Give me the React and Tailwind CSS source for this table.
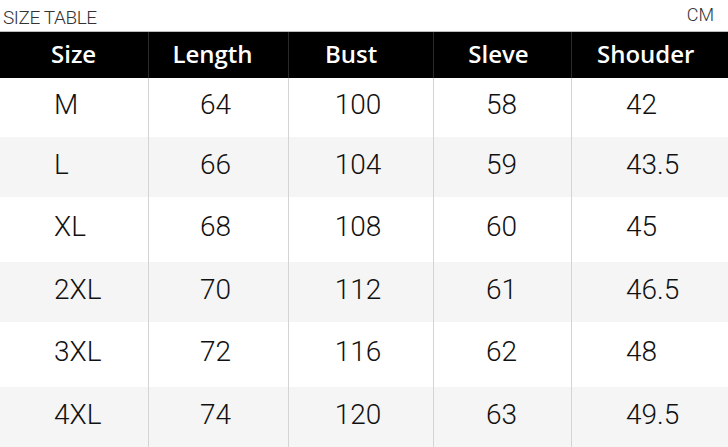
const rows = [
  { size: "M", length: "64", bust: "100", sleve: "58", shoulder: "42", h: "h-[59px]", bg: "bg-white" },
  { size: "L", length: "66", bust: "104", sleve: "59", shoulder: "43.5", h: "h-[60px]", bg: "bg-[#f5f5f5]" },
  { size: "XL", length: "68", bust: "108", sleve: "60", shoulder: "45", h: "h-[65px]", bg: "bg-white" },
  { size: "2XL", length: "70", bust: "112", sleve: "61", shoulder: "46.5", h: "h-[60px]", bg: "bg-[#f5f5f5]" },
  { size: "3XL", length: "72", bust: "116", sleve: "62", shoulder: "48", h: "h-[65px]", bg: "bg-white" },
  { size: "4XL", length: "74", bust: "120", sleve: "63", shoulder: "49.5", h: "h-[60px]", bg: "bg-[#f5f5f5]" },
];

const grid = "grid grid-cols-[148px_140px_145px_138px_157px]";

export default function App() {
  return (
    <div className="w-[728px] h-[447px] bg-white overflow-hidden font-['Roboto','Liberation_Sans',sans-serif]">
      {/* title line */}
      <div className="h-[31px] flex items-start justify-between px-[3px] pt-[8px] font-light text-[#333] leading-none">
        <span className="text-[19px] tracking-[-0.4px]">SIZE TABLE</span>
        <span className="text-[18px] pr-[11px] -mt-[2px]">CM</span>
      </div>
      <div className="h-px bg-[#bdbdbd]" />

      {/* header */}
      <div className={`${grid} h-[46px] bg-black text-white text-[24px] font-semibold font-['Open_Sans','Noto_Sans',sans-serif] items-center leading-none`}>
        <div className="pl-[51px] pb-[2px]">Size</div>
        <div className="text-center pr-[12px] pb-[2px] border-l border-[#2a2a2a] h-full flex items-center justify-center">Length</div>
        <div className="text-center pr-[20px] pb-[2px] border-l border-[#2a2a2a] h-full flex items-center justify-center">Bust</div>
        <div className="text-center pr-[8px] pb-[2px] border-l border-[#2a2a2a] h-full flex items-center justify-center">Sleve</div>
        <div className="pl-[25px] pb-[2px] border-l border-[#2a2a2a] h-full flex items-center">Shouder</div>
      </div>

      {/* body */}
      {rows.map((r) => (
        <div key={r.size} className={`${grid} ${r.h} ${r.bg} text-[28px] font-light text-[#111] leading-none`}>
          <div className="flex items-center pl-[54px] pb-[5px]">{r.size}</div>
          <div className="flex items-center justify-center pr-[6px] pb-[5px] border-l border-[#d4d4d4]">{r.length}</div>
          <div className="flex items-center justify-center pr-[6px] pb-[5px] border-l border-[#d4d4d4]">{r.bust}</div>
          <div className="flex items-center justify-center pr-[2px] pb-[5px] border-l border-[#d4d4d4]">{r.sleve}</div>
          <div className="flex items-center pl-[54px] pb-[5px] border-l border-[#d4d4d4]">{r.shoulder}</div>
        </div>
      ))}
    </div>
  );
}
